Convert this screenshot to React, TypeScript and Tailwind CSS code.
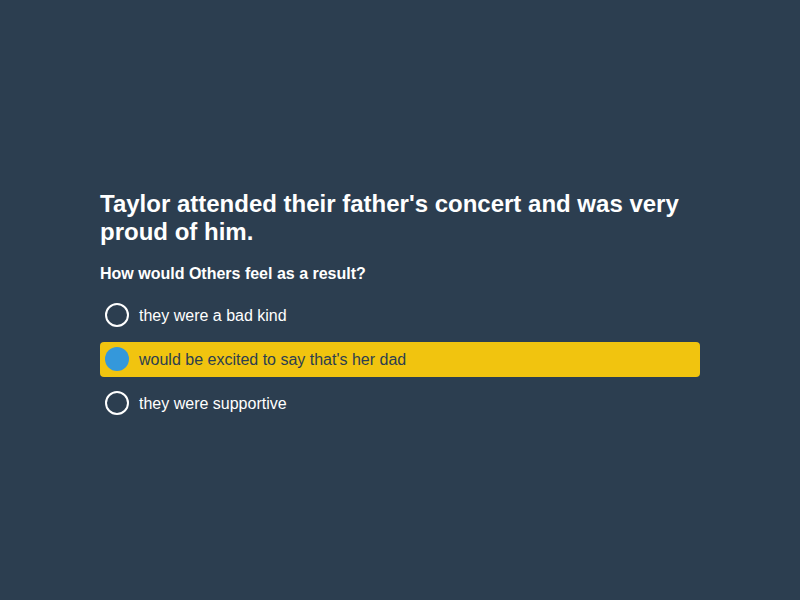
import { useState } from "react";

const options = [
  "they were a bad kind",
  "would be excited to say that's her dad",
  "they were supportive",
];

export default function App() {
  const [selected, setSelected] = useState(1);

  return (
    <div
      className="min-h-screen w-full bg-[#2c3e50] flex items-center justify-center pt-[9px]"
      style={{ fontFamily: '"Liberation Sans", Arial, sans-serif' }}
    >
      <div className="w-[600px]">
        <h1 className="text-white text-[24px] leading-[28px] font-bold">
          Taylor attended their father's concert and was very proud of him.
        </h1>
        <p className="mt-[18px] text-white text-[16px] leading-[19px] font-bold">
          How would Others feel as a result?
        </p>

        {/* варианты ответа */}
        <div className="mt-[15px] mb-[-1px] flex flex-col gap-[9px]">
          {options.map((o, i) => {
            const active = i === selected;
            return (
              <button
                key={o}
                onClick={() => setSelected(i)}
                className={
                  active
                    ? "h-[35px] flex items-center gap-[10px] px-[5px] rounded-[4px] bg-[#f1c40f] text-[#2c3e50] text-left"
                    : "h-[35px] flex items-center gap-[10px] px-[5px] rounded-[4px] text-white text-left"
                }
              >
                {active ? (
                  <span className="w-[24px] h-[24px] rounded-full bg-[#3498db] shrink-0" />
                ) : (
                  <span className="w-[24px] h-[24px] rounded-full border-2 border-white shrink-0" />
                )}
                <span className="text-[16px] leading-[19px]">{o}</span>
              </button>
            );
          })}
        </div>
      </div>
    </div>
  );
}
